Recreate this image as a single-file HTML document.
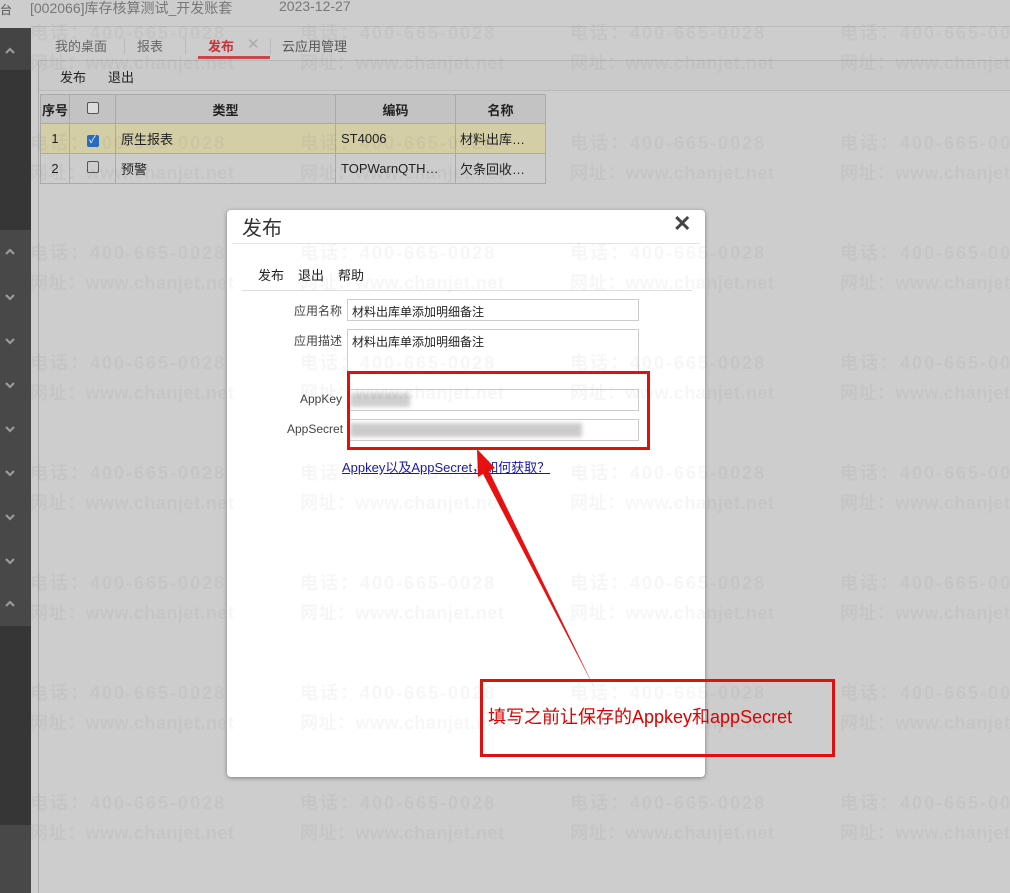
<!DOCTYPE html>
<html><head><meta charset="utf-8"><style>
*{margin:0;padding:0;box-sizing:border-box}
body{width:1010px;height:893px;overflow:hidden;background:#cdcdcd;font-family:"Liberation Sans","Noto Sans CJK SC",sans-serif;font-size:13px;color:#222;position:relative}
.a{position:absolute;white-space:nowrap}
.wm{position:absolute;font-size:18px;font-weight:bold;color:rgba(0,0,0,0.035);white-space:nowrap;z-index:50;letter-spacing:0.5px}
.p{letter-spacing:2px}
td,th{border:1px solid #aaa;font-weight:normal}
</style></head><body>
<div class="a" style="left:0;top:0;width:1010px;height:26px;background:#cdcdcd"></div>
<div class="a" style="left:0;top:1px;font-size:12px;color:#555">台</div>
<div class="a" style="left:30px;top:-2px;font-size:14px;color:#777">[002066]库存核算测试_开发账套</div>
<div class="a" style="left:279px;top:-2px;font-size:14px;color:#777">2023-12-27</div>
<!-- sidebar -->
<div class="a" style="left:0;top:28px;width:31px;height:42px;background:#444"></div>
<div class="a" style="left:0;top:70px;width:31px;height:160px;background:#363636"></div>
<div class="a" style="left:0;top:230px;width:31px;height:396px;background:#484848"></div>
<div class="a" style="left:0;top:626px;width:31px;height:199px;background:#363636"></div>
<div class="a" style="left:0;top:825px;width:31px;height:68px;background:#484848"></div>
<svg class="a" style="left:0;top:0" width="31" height="893">
<g fill="none" stroke="#9a9a9a" stroke-width="2.2">
<path d="M6 53l4-4 4 4"/>
<path d="M6 254l4-4 4 4"/><path d="M6 295l4 4 4-4"/><path d="M6 339l4 4 4-4"/><path d="M6 383l4 4 4-4"/><path d="M6 427l4 4 4-4"/><path d="M6 471l4 4 4-4"/><path d="M6 515l4 4 4-4"/><path d="M6 559l4 4 4-4"/><path d="M6 606l4-4 4 4"/>
</g></svg>
<div class="a" style="left:38px;top:60px;width:1px;height:833px;background:#aaa"></div>
<div class="a" style="left:31px;top:26px;width:979px;height:1px;background:#bbb"></div>
<div class="a" style="left:38px;top:60px;width:972px;height:1px;background:#b5b5b5"></div>
<div class="a" style="left:55px;top:36px;color:#666">我的桌面</div>
<div class="a" style="left:124px;top:38px;width:1px;height:16px;background:#bbb"></div>
<div class="a" style="left:137px;top:36px;color:#666">报表</div>
<div class="a" style="left:185px;top:38px;width:1px;height:16px;background:#bbb"></div>
<div class="a" style="left:208px;top:36px;color:#c8343c;font-weight:bold">发布</div>
<div class="a" style="left:247px;top:35px;color:#aaa;font-size:15px">✕</div>
<div class="a" style="left:198px;top:56px;width:72px;height:3px;background:#c8464c"></div>
<div class="a" style="left:270px;top:38px;width:1px;height:16px;background:#bbb"></div>
<div class="a" style="left:282px;top:36px;color:#555">云应用管理</div>
<div class="a" style="left:39px;top:61px;width:971px;height:30px;background:#cacaca;border-bottom:1px solid #bbb"></div>
<div class="a" style="left:60px;top:67px">发布</div>
<div class="a" style="left:108px;top:67px">退出</div>
<table class="a" style="left:40px;top:94px;border-collapse:collapse;font-size:13px">
<tr style="height:29px;background:#c3c3c3"><th style="width:29px;font-weight:bold">序号</th><th style="width:46px"><span style="display:inline-block;width:12px;height:12px;border:1px solid #555;border-radius:2px;background:#ddd"></span></th><th style="width:220px;font-weight:bold">类型</th><th style="width:120px;font-weight:bold">编码</th><th style="width:90px;font-weight:bold">名称</th></tr>
<tr style="height:30px;background:#d4cea6"><td style="text-align:center">1</td><td style="text-align:center"><span style="display:inline-block;width:12px;height:12px;border-radius:2px;background:#2a6dc0;color:#fff;font-size:10px;line-height:12px">✓</span></td><td style="padding-left:5px">原生报表</td><td style="padding-left:5px">ST4006</td><td style="padding-left:4px">材料出库…</td></tr>
<tr style="height:30px;background:#cdcdcd"><td style="text-align:center">2</td><td style="text-align:center"><span style="display:inline-block;width:12px;height:12px;border:1px solid #555;border-radius:2px"></span></td><td style="padding-left:5px">预警</td><td style="padding-left:5px">TOPWarnQTH…</td><td style="padding-left:4px">欠条回收…</td></tr>
</table>
<!-- dialog -->
<div class="a" style="left:227px;top:210px;width:478px;height:567px;background:#fff;border-radius:4px;box-shadow:0 1px 4px rgba(0,0,0,.4)"></div>
<div class="a" style="left:242px;top:212px;font-size:20px;color:#333">发布</div>
<div class="a" style="left:673px;top:211px;font-size:22px;color:#444;font-weight:bold">✕</div>
<div class="a" style="left:232px;top:243px;width:468px;height:1px;background:#e2e2e2"></div>
<div class="a" style="left:258px;top:265px">发布</div>
<div class="a" style="left:298px;top:265px">退出</div>
<div class="a" style="left:338px;top:265px">帮助</div>
<div class="a" style="left:242px;top:290px;width:450px;height:1px;background:#ddd"></div>
<div class="a" style="left:294px;top:302px;font-size:12px;color:#444">应用名称</div>
<div class="a" style="left:347px;top:299px;width:292px;height:22px;border:1px solid #ccc;font-size:12px;padding:3px 4px">材料出库单添加明细备注</div>
<div class="a" style="left:294px;top:332px;font-size:12px;color:#444">应用描述</div>
<div class="a" style="left:347px;top:329px;width:292px;height:44px;border:1px solid #ccc;font-size:12px;padding:3px 4px">材料出库单添加明细备注</div>
<div class="a" style="left:300px;top:392px;font-size:12px;color:#444">AppKey</div>
<div class="a" style="left:347px;top:389px;width:292px;height:22px;border:1px solid #ccc"></div>
<div class="a" style="left:350px;top:393px;width:60px;height:14px;background:#cfcfcf;filter:blur(2px)"></div>
<div class="a" style="left:287px;top:422px;font-size:12px;color:#444">AppSecret</div>
<div class="a" style="left:347px;top:419px;width:292px;height:22px;border:1px solid #ccc"></div>
<div class="a" style="left:350px;top:423px;width:232px;height:14px;background:#cbcbcb;filter:blur(2px)"></div>
<div class="a" style="left:347px;top:371px;width:303px;height:79px;border:3px solid #e01010"></div>
<div class="a" style="left:342px;top:457px;color:#1a1aa6;text-decoration:underline">Appkey以及AppSecret，如何获取？</div>
<svg class="a" style="left:0;top:0;z-index:40" width="1010" height="893">
<polygon points="477,449 495,468 489,471 594,687 483,474 478,477" fill="#e81010"/>
</svg>
<div class="a" style="left:480px;top:679px;width:355px;height:78px;border:3px solid #e01010;z-index:40"></div>
<div class="a" style="left:488px;top:703px;color:#e00000;font-size:18px;z-index:40">填写之前让保存的Appkey和appSecret</div>
<!-- watermarks -->
<div class="wm p" style="left:30px;top:19px">电话：400-665-0028</div><div class="wm p" style="left:300px;top:19px">电话：400-665-0028</div><div class="wm p" style="left:570px;top:19px">电话：400-665-0028</div><div class="wm p" style="left:840px;top:19px">电话：400-665-0028</div>
<div class="wm" style="left:30px;top:49px">网址：www.chanjet.net</div><div class="wm" style="left:300px;top:49px">网址：www.chanjet.net</div><div class="wm" style="left:570px;top:49px">网址：www.chanjet.net</div><div class="wm" style="left:840px;top:49px">网址：www.chanjet.net</div>
<div class="wm p" style="left:30px;top:129px">电话：400-665-0028</div><div class="wm p" style="left:300px;top:129px">电话：400-665-0028</div><div class="wm p" style="left:570px;top:129px">电话：400-665-0028</div><div class="wm p" style="left:840px;top:129px">电话：400-665-0028</div>
<div class="wm" style="left:30px;top:159px">网址：www.chanjet.net</div><div class="wm" style="left:300px;top:159px">网址：www.chanjet.net</div><div class="wm" style="left:570px;top:159px">网址：www.chanjet.net</div><div class="wm" style="left:840px;top:159px">网址：www.chanjet.net</div>
<div class="wm p" style="left:30px;top:239px">电话：400-665-0028</div><div class="wm p" style="left:300px;top:239px">电话：400-665-0028</div><div class="wm p" style="left:570px;top:239px">电话：400-665-0028</div><div class="wm p" style="left:840px;top:239px">电话：400-665-0028</div>
<div class="wm" style="left:30px;top:269px">网址：www.chanjet.net</div><div class="wm" style="left:300px;top:269px">网址：www.chanjet.net</div><div class="wm" style="left:570px;top:269px">网址：www.chanjet.net</div><div class="wm" style="left:840px;top:269px">网址：www.chanjet.net</div>
<div class="wm p" style="left:30px;top:349px">电话：400-665-0028</div><div class="wm p" style="left:300px;top:349px">电话：400-665-0028</div><div class="wm p" style="left:570px;top:349px">电话：400-665-0028</div><div class="wm p" style="left:840px;top:349px">电话：400-665-0028</div>
<div class="wm" style="left:30px;top:379px">网址：www.chanjet.net</div><div class="wm" style="left:300px;top:379px">网址：www.chanjet.net</div><div class="wm" style="left:570px;top:379px">网址：www.chanjet.net</div><div class="wm" style="left:840px;top:379px">网址：www.chanjet.net</div>
<div class="wm p" style="left:30px;top:459px">电话：400-665-0028</div><div class="wm p" style="left:300px;top:459px">电话：400-665-0028</div><div class="wm p" style="left:570px;top:459px">电话：400-665-0028</div><div class="wm p" style="left:840px;top:459px">电话：400-665-0028</div>
<div class="wm" style="left:30px;top:489px">网址：www.chanjet.net</div><div class="wm" style="left:300px;top:489px">网址：www.chanjet.net</div><div class="wm" style="left:570px;top:489px">网址：www.chanjet.net</div><div class="wm" style="left:840px;top:489px">网址：www.chanjet.net</div>
<div class="wm p" style="left:30px;top:569px">电话：400-665-0028</div><div class="wm p" style="left:300px;top:569px">电话：400-665-0028</div><div class="wm p" style="left:570px;top:569px">电话：400-665-0028</div><div class="wm p" style="left:840px;top:569px">电话：400-665-0028</div>
<div class="wm" style="left:30px;top:599px">网址：www.chanjet.net</div><div class="wm" style="left:300px;top:599px">网址：www.chanjet.net</div><div class="wm" style="left:570px;top:599px">网址：www.chanjet.net</div><div class="wm" style="left:840px;top:599px">网址：www.chanjet.net</div>
<div class="wm p" style="left:30px;top:679px">电话：400-665-0028</div><div class="wm p" style="left:300px;top:679px">电话：400-665-0028</div><div class="wm p" style="left:570px;top:679px">电话：400-665-0028</div><div class="wm p" style="left:840px;top:679px">电话：400-665-0028</div>
<div class="wm" style="left:30px;top:709px">网址：www.chanjet.net</div><div class="wm" style="left:300px;top:709px">网址：www.chanjet.net</div><div class="wm" style="left:570px;top:709px">网址：www.chanjet.net</div><div class="wm" style="left:840px;top:709px">网址：www.chanjet.net</div>
<div class="wm p" style="left:30px;top:789px">电话：400-665-0028</div><div class="wm p" style="left:300px;top:789px">电话：400-665-0028</div><div class="wm p" style="left:570px;top:789px">电话：400-665-0028</div><div class="wm p" style="left:840px;top:789px">电话：400-665-0028</div>
<div class="wm" style="left:30px;top:819px">网址：www.chanjet.net</div><div class="wm" style="left:300px;top:819px">网址：www.chanjet.net</div><div class="wm" style="left:570px;top:819px">网址：www.chanjet.net</div><div class="wm" style="left:840px;top:819px">网址：www.chanjet.net</div>
</body></html>
